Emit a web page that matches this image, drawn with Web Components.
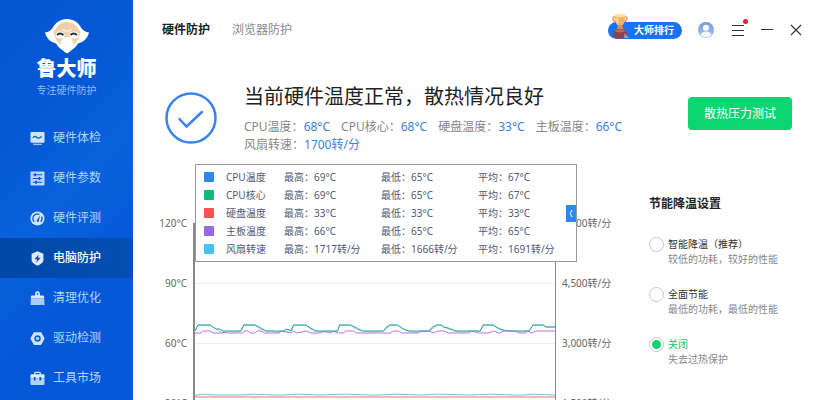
<!DOCTYPE html>
<html lang="zh-CN">
<head>
<meta charset="utf-8">
<meta name="viewport" content="width=device-width, initial-scale=1">
<title>鲁大师</title>
<style>
  body {
    margin: 0;
    font-family: "Noto Sans", "Noto Sans CJK SC", sans-serif;
    font-size: 12px;
    line-height: 18px;
    color: #333;
    background: #fff;
  }
</style>
</head>
<body>
<lu-app>
  <lu-sidebar slot="side">
    <lu-nav-item icon="monitor">硬件体检</lu-nav-item>
    <lu-nav-item icon="params">硬件参数</lu-nav-item>
    <lu-nav-item icon="gauge">硬件评测</lu-nav-item>
    <lu-nav-item icon="shield" active>电脑防护</lu-nav-item>
    <lu-nav-item icon="broom">清理优化</lu-nav-item>
    <lu-nav-item icon="driver">驱动检测</lu-nav-item>
    <lu-nav-item icon="toolbox">工具市场</lu-nav-item>
  </lu-sidebar>
  <lu-header></lu-header>
  <lu-status heading="当前硬件温度正常，散热情况良好">
    <lu-stat label="CPU温度">68°C</lu-stat>
    <lu-stat label="CPU核心">68°C</lu-stat>
    <lu-stat label="硬盘温度">33°C</lu-stat>
    <lu-stat label="主板温度">66°C</lu-stat>
    <lu-stat label="风扇转速">1700转/分</lu-stat>
  </lu-status>
  <lu-chart slot="chart"></lu-chart>
  <lu-settings slot="settings"></lu-settings>
</lu-app>

<script>
const ICONS = {
  monitor: `
    <path d="M1.5 1h13a1 1 0 0 1 1 1v9.500a1 1 0 0 1-1 1h-13a1 1 0 0 1-1-1V2a1 1 0 0 1 1-1z" fill="#cfe3fb"/>
    <path d="M3.500 13.500h9v1.500h-9z" fill="#9cc3f3"/>
    <path d="M3 7.300c1.500-1.800 2.700-2 4-.6s2.600 1.400 5.500-.9" fill="none" stroke="#0a58cc" stroke-width="1.300"/>`,
  params: `
    <rect x=".5" y=".5" width="15" height="15" rx="1" fill="#b9d6f8"/>
    <path d="M3 4h10M3 8h10M3 12h10" stroke="#0a58cc" stroke-width="1.300"/>
    <path d="M5.500 2.500v3M10 6.500v3M6.500 10.500v3" stroke="#0a58cc" stroke-width="1.800"/>`,
  gauge: `
    <circle cx="8" cy="8" r="7.500" fill="#cfe3fb"/>
    <path d="M4.500 11.500A4.900 4.900 0 0 1 10 3.600M12.400 6a4.900 4.900 0 0 1-.9 5.500" fill="none" stroke="#0a58cc" stroke-width="1.300"/>
    <path d="M7 10.500L10.800 4.500 9.300 11a1.200 1.200 0 0 1-2.300-.5z" fill="#0a58cc"/>`,
  shield: `
    <path d="M8 .3l6.300 2.500v6.700c0 2.700-3.200 4.700-6.300 6.300-3.100-1.600-6.300-3.600-6.300-6.300V2.800z" fill="#dce9fb"/>
    <path d="M9.300 3.700L4.800 8.800h2.700l-.9 3.800 4.700-5.300H8.500z" fill="#0a4aa8"/>`,
  broom: `
    <path d="M8 .3a2.600 2.600 0 0 1 2.600 2.600v1.900h3a1.500 1.500 0 0 1 1.500 1.500V8H.9V6.300a1.500 1.500 0 0 1 1.500-1.500h3V2.900A2.600 2.600 0 0 1 8 .3z" fill="#dce9fb"/>
    <circle cx="8" cy="3" r="1" fill="#0a58cc"/>
    <path d="M.9 8h14.200l.4 7H13l-.5-1.500-.3 1.500H.5z" fill="#a9cdf7"/>`,
  driver: `
    <path d="M4.800 1.200h6.400a1 1 0 0 1 .9.5l3.300 5.700a1 1 0 0 1 0 1.200l-3.300 5.700a1 1 0 0 1-.9.500H4.800a1 1 0 0 1-.9-.5L.6 8.600a1 1 0 0 1 0-1.200l3.300-5.700a1 1 0 0 1 .9-.5z" fill="#cfe3fb"/>
    <circle cx="8" cy="8" r="2.700" fill="#a9cdf7" stroke="#0a58cc" stroke-width="1.500"/>`,
  toolbox: `
    <path d="M5 4V2.500a1 1 0 0 1 1-1h4a1 1 0 0 1 1 1V4" fill="none" stroke="#cfe3fb" stroke-width="1.500"/>
    <path d="M1.500 3.500h13a1 1 0 0 1 1 1V8H.5V4.500a1 1 0 0 1 1-1z" fill="#dce9fb"/>
    <path d="M.5 8h15v5.800a1 1 0 0 1-1 1h-13a1 1 0 0 1-1-1z" fill="#b3d2f8"/>
    <path d="M5 6.500v3.600M11 6.500v3.600" stroke="#0a58cc" stroke-width="1.800"/>`
};

class LuApp extends HTMLElement {
  constructor() {
    super();
    this.attachShadow({ mode: 'open' });
    this.shadowRoot.innerHTML = `
      <style>
        :host {
          display: flex;
          height: 100vh;
          overflow: hidden;
        }

        main {
          flex: 1;
          min-width: 0;
        }

        .body {
          display: grid;
          grid-template-columns: 1fr 168px;
          margin-top: 11px;
        }
      </style>
      <slot name="side"></slot>
      <main>
        <slot></slot>
        <div class="body">
          <slot name="chart"></slot>
          <slot name="settings"></slot>
        </div>
      </main>
    `;
  }
}

class LuSidebar extends HTMLElement {
  constructor() {
    super();
    this.attachShadow({ mode: 'open' });
    this.shadowRoot.innerHTML = `
      <style>
        :host {
          display: block;
          flex: 0 0 133px;
          background:
            linear-gradient(135deg, transparent 62%, rgba(0, 80, 210, 0.12) 62%),
            linear-gradient(135deg, #0455d0 0%, #0558d6 30%, #0861dc 48%, #0559d8 70%);
        }

        .brand {
          display: flex;
          flex-direction: column;
          align-items: center;
          height: 100px;
          padding-top: 18px;
        }

        .brand svg {
          width: 48px;
          height: 36px;
        }

        .name {
          font-size: 20px;
          font-weight: 900;
          line-height: 30px;
          color: #fff;
        }

        .slogan {
          font-size: 10px;
          line-height: 12px;
          color: #8cbcf5;
        }
      </style>
      <div class="brand">
        <svg viewBox="0 0 48 36" aria-hidden="true">
          <path d="M24 1c7 0 11.500 4 14 8.500 2 3.300 4.600 4.500 8 5-1.500 6-5.500 9.500-11 11-2.500 4.500-6.500 6.500-9 8.800a3 3 0 0 1-4 0c-2.500-2.300-6.500-4.300-9-8.800-5.500-1.500-9.500-5-11-11 3.400-.5 6-1.700 8-5C12.500 5 17 1 24 1z" fill="#fff"/>
          <path d="M24 4c6 0 10 3.500 11.500 7.500 2.700 1.800 1.800 4.800.8 6.500-1 5-4 8-7.300 8L24 22l-5 4c-3.300 0-6.300-3-7.300-8-1-1.700-1.900-4.700.8-6.500C14 7.500 18 4 24 4z" fill="#efcfae"/>
          <path d="M20 11c1 3 7 3 8 0" fill="none" stroke="#f8e8d5" stroke-width="2"/>
          <ellipse cx="17" cy="17" rx="4.500" ry="3.500" fill="#fff"/>
          <ellipse cx="31" cy="17" rx="4.500" ry="3.500" fill="#fff"/>
          <path d="M18 25c0-4 2.500-6 6-6s6 2 6 6l-3 3h-6z" fill="#fff"/>
          <path d="M14 17q3-3 6.500 0M27.500 17q3-3 6.500 0" fill="none" stroke="#252b38" stroke-width="1.800"/>
        </svg>
        <div class="name">鲁大师</div>
        <div class="slogan">专注硬件防护</div>
      </div>
      <nav><slot></slot></nav>
    `;
  }
}

class LuNavItem extends HTMLElement {
  constructor() {
    super();
    this.attachShadow({ mode: 'open' });
    this.shadowRoot.innerHTML = `
      <style>
        :host {
          display: block;
        }

        a {
          display: flex;
          align-items: center;
          gap: 8px;
          height: 40px;
          padding-left: 30px;
          color: #b4d3fa;
          text-decoration: none;
        }

        svg {
          width: 15px;
          height: 15px;
        }

        :host([active]) a {
          color: #fff;
          font-weight: 500;
          background: linear-gradient(90deg, #0048a6, #054fb2);
        }
      </style>
      <a href="#"><svg viewBox="0 0 16 16" aria-hidden="true">${ICONS[this.getAttribute('icon')]}</svg><slot></slot></a>
    `;
  }
}

class LuHeader extends HTMLElement {
  constructor() {
    super();
    this.attachShadow({ mode: 'open' });
    this.shadowRoot.innerHTML = `
      <style>
        :host {
          display: flex;
          align-items: center;
          justify-content: space-between;
          height: 60px;
          padding: 0 7px 0 29px;
        }

        nav, .tools {
          display: flex;
          align-items: center;
        }

        nav {
          gap: 22px;
        }

        a {
          color: #888;
          text-decoration: none;
        }

        a.current {
          color: #222;
          font-weight: 700;
        }

        button {
          padding: 0;
          border: 0;
          background: none;
          font: inherit;
          cursor: pointer;
        }

        .rank {
          position: relative;
          width: 74px;
          height: 17px;
          margin-right: 16px;
          padding-left: 18px;
          border-radius: 9px;
          background: #1b72f0;
          color: #fff;
          font-size: 10px;
          font-weight: 700;
          line-height: 16px;
        }

        .rank svg {
          position: absolute;
          left: 3px;
          bottom: 0;
          width: 20px;
          height: 26px;
        }

        .tool {
          position: relative;
          display: grid;
          place-items: center;
          width: 29px;
          height: 20px;
        }

        .tool.user {
          width: 16px;
          margin-right: 9px;
        }

        .dot {
          position: absolute;
          top: -1px;
          right: 4px;
          width: 5px;
          height: 5px;
          border-radius: 50%;
          background: #e3262c;
        }
      </style>
      <nav>
        <a class="current" href="#">硬件防护</a>
        <a href="#">浏览器防护</a>
      </nav>
      <div class="tools">
        <button class="rank">
          <svg viewBox="0 0 20 26" aria-hidden="true">
            <path d="M4.500 4C1 2.500 1 8 6 9M13.500 4c3.500-1.500 3.500 4-1.500 5" fill="none" stroke="#e8a062" stroke-width="1.500"/>
            <path d="M3.500 2.500h11L13 10c-.6 2-2 3-4 3s-3.400-1-4-3z" fill="#f2b168"/>
            <ellipse cx="9" cy="2.500" rx="5.500" ry="1.800" fill="#ffe09b"/>
            <path d="M6 5l.8 5" stroke="#ffd9a0" stroke-width="2"/>
            <path d="M7 12.500h4.500l1 4.500H5.800z" fill="#d98b60"/>
            <path d="M3 18c1-3 10.500-3 12 0l2 5.500c-2 3-13.500 3-15.500 0z" fill="#854652"/>
            <ellipse cx="9" cy="17.800" rx="4.800" ry="1.600" fill="#b86b5f"/>
            <path d="M13.500 20l4.500 5h-5z" fill="#c98f8b"/>
          </svg>
          大师排行
        </button>
        <button class="tool user" aria-label="账号">
          <svg width="16" height="16" viewBox="0 0 16 16">
            <defs><linearGradient id="g" x2="0" y2="1"><stop stop-color="#6f9bd5"/><stop offset="1" stop-color="#a9c9f0"/></linearGradient></defs>
            <circle cx="8" cy="8" r="8" fill="url(#g)"/>
            <circle cx="8" cy="5.800" r="3" fill="#fff"/>
            <path d="M2.800 13.200c0-5 10.400-5 10.400 0-3 2.600-7.400 2.600-10.400 0z" fill="#f3f8ff"/>
          </svg>
        </button>
        <button class="tool" aria-label="菜单">
          <svg width="12" height="12" viewBox="0 0 12 12"><path d="M0 1.500h12M0 6.500h12M0 11.500h12" stroke="#333"/></svg>
          <span class="dot"></span>
        </button>
        <button class="tool" aria-label="最小化">
          <svg width="12" height="12" viewBox="0 0 12 12"><path d="M0 5.500h12" stroke="#333"/></svg>
        </button>
        <button class="tool" aria-label="关闭窗口">
          <svg width="12" height="12" viewBox="0 0 12 12"><path d="M1 1l10 10M11 1L1 11" stroke="#333" stroke-width="1.100"/></svg>
        </button>
      </div>
    `;
  }
}

class LuStatus extends HTMLElement {
  constructor() {
    super();
    this.attachShadow({ mode: 'open' });
    this.shadowRoot.innerHTML = `
      <style>
        :host {
          display: flex;
          align-items: flex-start;
          padding: 22px 25px 0 32px;
        }

        .mark {
          flex: none;
          width: 52px;
          height: 52px;
          margin: 10px 27px 0 0;
        }

        .text {
          flex: 1;
        }

        h1 {
          margin: 0 0 6px;
          font-size: 20px;
          font-weight: 400;
          line-height: 30px;
          color: #222;
        }

        .stats {
          display: flex;
          flex-wrap: wrap;
          column-gap: 11px;
        }

        button {
          flex: none;
          height: 33px;
          margin-top: 15px;
          padding: 0 16px;
          border: 0;
          border-radius: 4px;
          background: #0bd470;
          color: #fff;
          font: inherit;
          cursor: pointer;
        }
      </style>
      <svg class="mark" viewBox="0 0 52 52" aria-hidden="true">
        <circle cx="26" cy="26" r="24.500" fill="none" stroke="#3b82ea" stroke-width="2.500"/>
        <path d="M14.500 27l7 7.500L37 20" fill="none" stroke="#3b82ea" stroke-width="2.500" stroke-linecap="round"/>
      </svg>
      <div class="text">
        <h1>${this.getAttribute('heading')}</h1>
        <div class="stats"><slot></slot></div>
      </div>
      <button>散热压力测试</button>
    `;
  }
}

class LuStat extends HTMLElement {
  constructor() {
    super();
    this.attachShadow({ mode: 'open' });
    this.shadowRoot.innerHTML = `
      <style>
        :host {
          display: block;
          white-space: nowrap;
          color: #888;
        }

        span {
          color: #3b7fe0;
        }
      </style>
      ${this.getAttribute('label')}：<span><slot></slot></span>
    `;
  }
}

// x runs 0..361 over the time range, y is in °C
const CORE = [
  [0, 66], [3, 69], [15, 69], [18, 68], [21, 67], [25, 67], [28, 66], [46, 66], [49, 69], [60, 69], [66, 67.500],
  [71, 66], [89, 66], [91, 67], [95, 66.500], [96, 66], [99, 69], [111, 69], [116, 67.500], [121, 66], [143, 66], [145, 69],
  [156, 69], [163, 67.300], [168, 66], [189, 66], [192, 68], [196, 69], [203, 69], [209, 67], [214, 66], [235, 66],
  [238, 68], [243, 69], [247, 69], [249, 68], [254, 67.500], [261, 66], [286, 66], [289, 69], [299, 69], [304, 67.200],
  [313, 66], [335, 66], [339, 69], [349, 69], [352, 68], [361, 68]
];
const CPU = [
  [0, 66], [3, 69], [15, 69], [18, 68], [24, 66], [27, 65.500], [31, 65.500], [34, 66], [37, 65.500], [46, 66], [49, 69],
  [60, 69], [65, 67], [71, 66], [78, 66], [80, 65.500], [84, 65.500], [90, 66], [97, 66], [99, 69], [111, 69], [116, 67],
  [121, 66], [129, 65.500], [134, 66], [137, 65.500], [143, 66], [145, 69], [156, 69], [161, 67], [168, 66], [176, 65.500],
  [189, 66], [196, 69], [203, 69], [209, 67], [214, 66], [218, 65.500], [222, 65.500], [226, 65.500], [235, 66], [243, 69],
  [247, 69], [254, 67], [261, 66], [269, 65.500], [275, 66], [286, 66], [289, 69], [299, 69], [308, 66.500], [316, 66],
  [323, 65.500], [335, 66], [339, 69], [349, 69], [352, 68], [361, 68]
];
const BOARD = [
  [0, 65], [6, 65], [8, 66], [15, 66], [18, 65], [27, 65], [29, 65.400], [32, 65], [47, 65], [50, 66], [53, 66],
  [56, 65], [60, 65], [62, 66], [67, 66], [69, 65], [84, 65], [87, 66], [96, 65], [99, 66], [102, 65], [107, 65.500],
  [112, 66], [116, 65], [126, 65], [129, 66], [135, 65], [139, 66], [143, 65], [149, 65], [151, 66], [159, 66],
  [162, 65], [196, 65], [199, 66], [204, 66], [207, 65], [223, 65], [227, 66], [235, 66], [239, 65], [243, 66],
  [250, 66], [254, 65], [274, 65], [278, 66], [284, 65], [294, 65], [299, 66], [305, 65], [310, 66], [322, 66],
  [325, 65], [331, 65], [334, 66], [338, 65], [341, 66], [361, 66]
];
const DISK = [[0, 33], [361, 33]];
const FAN = [
  [0, 33.800], [8, 34.400], [20, 34], [46, 34], [60, 34.400], [85, 33.900], [102, 34.400], [125, 34], [150, 34.400],
  [180, 33.900], [200, 34.400], [228, 34], [243, 34.400], [275, 34], [295, 34.400], [325, 33.900], [341, 34.400], [361, 34]
];

const line = (points, color) =>
  `<polyline points="${points.map(([x, t]) => `${x},${(120 - t) * 2}`).join(' ')}" stroke="${color}"/>`;

const LEGEND = [
  ['CPU温度', '#2f86eb', '69°C', '65°C', '67°C'],
  ['CPU核心', '#14b777', '69°C', '65°C', '67°C'],
  ['硬盘温度', '#fa5252', '33°C', '33°C', '33°C'],
  ['主板温度', '#9b66ee', '66°C', '65°C', '65°C'],
  ['风扇转速', '#43c4f3', '1717转/分', '1666转/分', '1691转/分']
];

class LuLegend extends HTMLElement {
  constructor() {
    super();
    this.attachShadow({ mode: 'open' });
    const rows = LEGEND.map(([name, color, max, min, avg]) => `
      <tr>
        <td class="key"><i style="background: ${color}"></i></td>
        <th scope="row">${name}</th>
        <td class="value">最高：${max}</td>
        <td class="value">最低：${min}</td>
        <td>平均：${avg}</td>
      </tr>`).join('');
    this.shadowRoot.innerHTML = `
      <style>
        :host {
          display: flex;
          align-items: center;
          box-sizing: border-box;
          padding: 3px 0 3px 8px;
          border: 1px solid #999;
          background: #fff;
        }

        table {
          flex: 1;
          width: 100%;
          table-layout: fixed;
          border-collapse: collapse;
          font-size: 10px;
          color: #4f5a74;
        }

        td, th {
          height: 18px;
          padding: 0;
          font-weight: 400;
          line-height: 18px;
          text-align: left;
          white-space: nowrap;
        }

        .key {
          width: 22px;
        }

        th {
          width: 58px;
        }

        .value {
          width: 97px;
        }

        i {
          display: block;
          width: 10px;
          height: 10px;
          border-radius: 1px;
        }

        button {
          flex: none;
          width: 10px;
          height: 17px;
          padding: 0;
          border: 0;
          background: #2f86eb;
          cursor: pointer;
        }

        svg {
          display: block;
          margin: auto;
        }
      </style>
      <table>${rows}</table>
      <button aria-label="收起"><svg width="4" height="9" viewBox="0 0 4 9"><path d="M3 1L1.300 4.500 3 8" fill="none" stroke="#fff"/></svg></button>
    `;
  }
}

class LuChart extends HTMLElement {
  constructor() {
    super();
    this.attachShadow({ mode: 'open' });
    this.shadowRoot.innerHTML = `
      <style>
        :host {
          position: relative;
          display: grid;
          grid-template-columns: 60px 1fr 93px;
          padding-top: 49px;
        }

        .axis {
          font-size: 10px;
          line-height: 18px;
          color: #666;
        }

        .axis div {
          height: 60px;
        }

        .left {
          padding-right: 6px;
          text-align: right;
        }

        .right {
          padding-left: 6px;
        }

        .plot {
          height: 240px;
          margin-top: 9px;
          border: solid #888;
          border-width: 0 1px 0 2px;
        }

        svg {
          display: block;
          width: 100%;
          height: 240px;
        }

        .grid {
          stroke: #f0f0f0;
        }

        polyline {
          fill: none;
          stroke-width: 1;
          vector-effect: non-scaling-stroke;
        }

        lu-legend {
          position: absolute;
          top: 0;
          left: 62px;
          right: 72px;
          margin-top: -1px;
        }
      </style>
      <div class="axis left"><div>120°C</div><div>90°C</div><div>60°C</div><div>30°C</div></div>
      <div class="plot">
        <svg viewBox="0 0 361 240" preserveAspectRatio="none" aria-hidden="true">
          <path class="grid" d="M0 .5h361M0 60.500h361M0 120.500h361M0 180.500h361"/>
          ${line(FAN, '#74bfe8')}
          ${line(DISK, '#e8737a')}
          ${line(CORE, '#1fae7a')}
          ${line(BOARD, '#b673f0')}
          ${line(CPU, 'rgba(60, 150, 215, 0.5)')}
        </svg>
      </div>
      <div class="axis right"><div>6,000转/分</div><div>4,500转/分</div><div>3,000转/分</div><div>1,500转/分</div></div>
      <lu-legend></lu-legend>
    `;
  }
}

const MODES = [
  ['smart', '智能降温（推荐）', '较低的功耗，较好的性能'],
  ['saving', '全面节能', '最低的功耗，最低的性能'],
  ['off', '关闭', '失去过热保护']
];

class LuSettings extends HTMLElement {
  constructor() {
    super();
    this.attachShadow({ mode: 'open' });
    const options = MODES.map(([id, name, note]) => `
      <div class="option">
        <input type="radio" name="mode" id="${id}"${id === 'off' ? ' checked' : ''}>
        <label for="${id}">${name}</label>
        <p>${note}</p>
      </div>`).join('');
    this.shadowRoot.innerHTML = `
      <style>
        :host {
          display: block;
          padding-top: 30px;
        }

        h2 {
          margin: 0 0 24px;
          font-size: 12px;
          line-height: 18px;
          color: #222;
        }

        .option {
          display: grid;
          grid-template-columns: 15px 1fr;
          column-gap: 4px;
          align-items: center;
          margin-bottom: 20px;
          font-size: 10px;
          line-height: 15px;
        }

        input {
          appearance: none;
          display: grid;
          place-items: center;
          box-sizing: border-box;
          width: 15px;
          height: 15px;
          margin: 0;
          border: 1px solid #c8c8c8;
          border-radius: 50%;
        }

        input:checked::before {
          content: "";
          width: 9px;
          height: 9px;
          border-radius: 50%;
          background: #0bd470;
        }

        input:checked + label {
          color: #0bc868;
        }

        p {
          grid-column: 2;
          margin: 0;
          color: #888;
        }
      </style>
      <h2>节能降温设置</h2>
      ${options}
    `;
  }
}

customElements.define('lu-app', LuApp);
customElements.define('lu-sidebar', LuSidebar);
customElements.define('lu-nav-item', LuNavItem);
customElements.define('lu-header', LuHeader);
customElements.define('lu-status', LuStatus);
customElements.define('lu-stat', LuStat);
customElements.define('lu-legend', LuLegend);
customElements.define('lu-chart', LuChart);
customElements.define('lu-settings', LuSettings);
</script>
</body>
</html>
